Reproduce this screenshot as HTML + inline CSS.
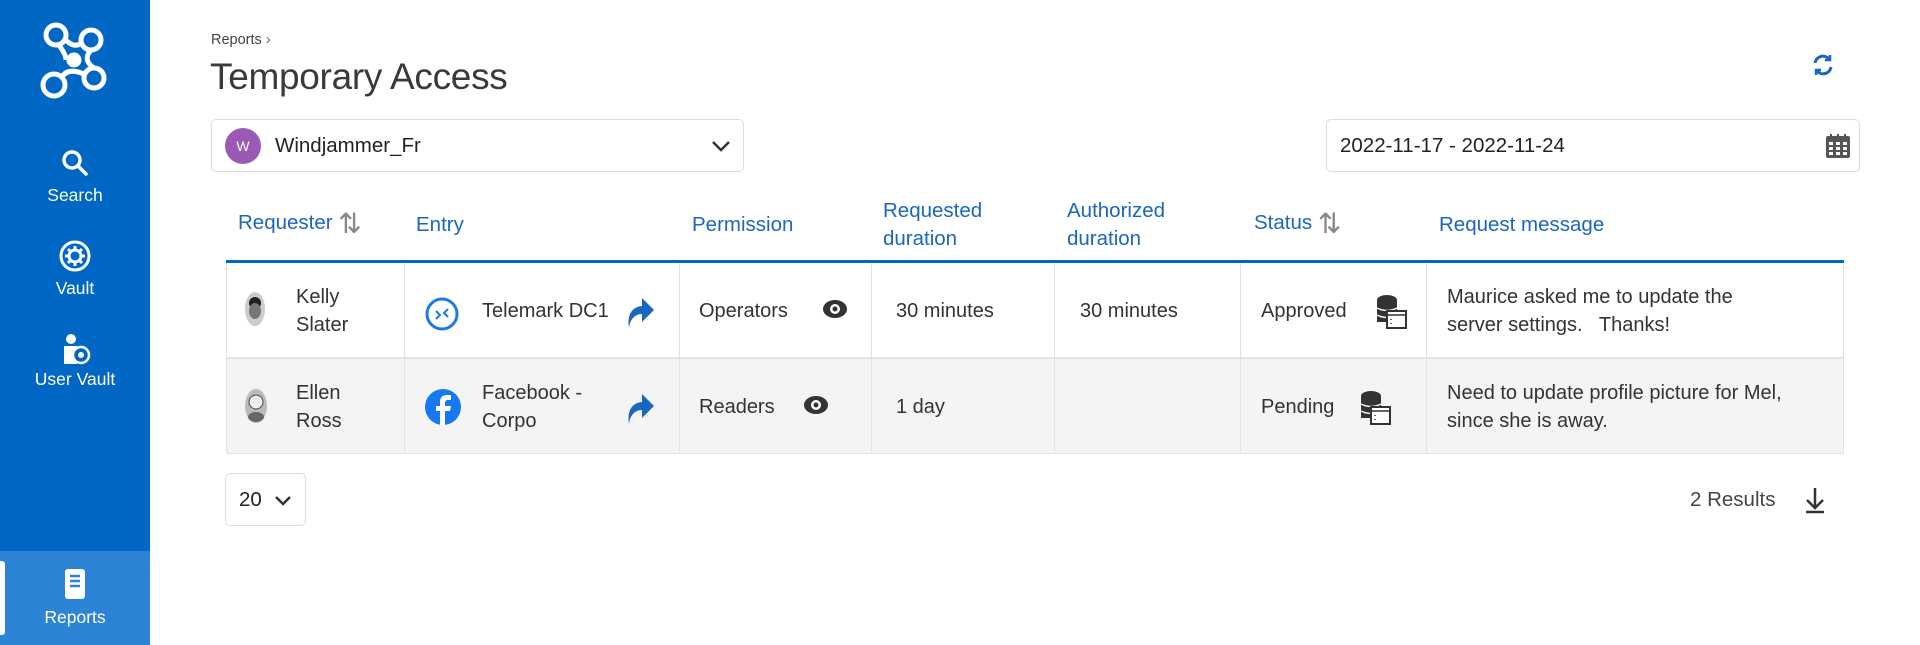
<!DOCTYPE html>
<html><head><meta charset="utf-8"><style>
*{box-sizing:border-box;margin:0;padding:0}
body{width:1920px;height:645px;overflow:hidden;background:#fff;font-family:"Liberation Sans",sans-serif;color:#333;position:relative}
.sb{position:absolute;left:0;top:0;width:150px;height:645px;background:#0067c5}
.nav{position:absolute;left:0;width:150px;text-align:center;color:#fff;font-size:17.5px}
.nav svg{display:block;margin:0 auto}
.act{position:absolute;left:0;top:551px;width:150px;height:94px;background:#2d83d6}
.act:before{content:"";position:absolute;left:0;top:10px;width:5px;height:74px;background:#fff;border-radius:0 3px 3px 0}
.abs{position:absolute}
.box{position:absolute;border:1px solid #ddd;border-radius:5px;background:#fff}
.th{position:absolute;color:#1a66c0;font-size:20.5px;line-height:28px}
.td{position:absolute;font-size:20px;line-height:28px;color:#333}
.vl{position:absolute;width:1px;background:#e2e2e2}
.sort{color:#888;font-size:28px;vertical-align:-4px}
</style></head><body>
<div class="sb">
 <svg class="abs" style="left:36px;top:20px" width="78" height="82" viewBox="0 0 78 82" fill="none" stroke="#fff" stroke-width="5">
  <circle cx="20" cy="15" r="10"/><circle cx="55" cy="20" r="10"/><circle cx="18" cy="65" r="11"/><circle cx="58" cy="58" r="10"/>
  <circle cx="38" cy="40" r="5" fill="#fff"/><path d="M28 18 Q38 30 47 22 M25 58 Q32 46 50 55 M22 24 Q30 34 30 40 M55 30 Q46 40 58 48"/>
 </svg>
 <div class="nav" style="top:148px"><svg width="30" height="30" viewBox="0 0 30 30" fill="none" stroke="#fff" stroke-width="3.5"><circle cx="12" cy="12" r="8"/><path d="M18 18l8 8" stroke-linecap="round"/></svg><div style="margin-top:7px">Search</div></div>
 <div class="nav" style="top:239px"><svg width="34" height="34" viewBox="0 0 34 34" fill="none" stroke="#fff" stroke-width="3"><circle cx="17" cy="17" r="14"/><circle cx="17" cy="17" r="6"/><path d="M17 7v4M17 23v4M7 17h4M23 17h4M10 10l3 3M21 21l3 3M24 10l-3 3M10 24l3-3"/></svg><div style="margin-top:5px">Vault</div></div>
 <div class="nav" style="top:332px"><svg width="34" height="34" viewBox="0 0 34 34" fill="#fff"><circle cx="13" cy="7" r="5"/><path d="M6 14h13v18H6z"/><circle cx="23" cy="23" r="8" fill="#0067c5" stroke="#fff" stroke-width="2.5"/><circle cx="23" cy="23" r="3"/></svg><div style="margin-top:3px">User Vault</div></div>
 <div class="act"></div>
 <div class="nav" style="top:568px"><svg width="26" height="32" viewBox="0 0 26 32"><rect x="3" y="1" width="20" height="30" rx="3" fill="#fff"/><path d="M8 8h10M8 13h10M8 18h10" stroke="#2d83d6" stroke-width="2.5"/></svg><div style="margin-top:7px">Reports</div></div>
</div>

<div class="abs" style="left:211px;top:32px;font-size:14.5px;color:#444">Reports <span style="color:#666">&#8250;</span></div>
<div class="abs" style="left:210px;top:56px;font-size:37px;color:#3a3a3a;letter-spacing:-0.3px">Temporary Access</div>
<svg class="abs" style="left:1811px;top:53px" width="24" height="24" viewBox="0 0 24 24" fill="none" stroke="#1a66c0" stroke-width="3"><path d="M4 10a8 8 0 0 1 14-4M20 14a8 8 0 0 1-14 4"/><path d="M19 2v5h-5M5 22v-5h5" stroke-width="2.5"/></svg>

<div class="box" style="left:211px;top:119px;width:533px;height:53px">
 <div class="abs" style="left:13px;top:8px;width:36px;height:36px;border-radius:50%;background:#9b59b6;color:#fff;font-size:14px;text-align:center;line-height:36px">W</div>
 <div class="abs" style="left:63px;top:14px;font-size:20.5px;color:#222">Windjammer_Fr</div>
 <svg class="abs" style="left:499px;top:19px" width="20" height="14" viewBox="0 0 20 14" fill="none" stroke="#333" stroke-width="2.5"><path d="M2 3l8 8 8-8"/></svg>
</div>
<div class="box" style="left:1326px;top:119px;width:534px;height:53px">
 <div class="abs" style="left:13px;top:14px;font-size:20.5px;color:#222">2022-11-17 - 2022-11-24</div>
 <svg class="abs" style="left:498px;top:13px" width="26" height="26" viewBox="0 0 26 26"><rect x="1" y="3" width="24" height="22" rx="2" fill="#555"/><path d="M6 1v5M13 1v5M20 1v5" stroke="#555" stroke-width="2"/><g fill="#fff"><rect x="4" y="9" width="4" height="3"/><rect x="11" y="9" width="4" height="3"/><rect x="18" y="9" width="4" height="3"/><rect x="4" y="14" width="4" height="3"/><rect x="11" y="14" width="4" height="3"/><rect x="18" y="14" width="4" height="3"/><rect x="4" y="19" width="4" height="3"/><rect x="11" y="19" width="4" height="3"/><rect x="18" y="19" width="4" height="3"/></g></svg>
</div>

<div class="th" style="left:238px;top:209px">Requester <span class="sort">&#8645;</span></div>
<div class="th" style="left:416px;top:211px">Entry</div>
<div class="th" style="left:692px;top:211px">Permission</div>
<div class="th" style="left:883px;top:197px">Requested<br>duration</div>
<div class="th" style="left:1067px;top:197px">Authorized<br>duration</div>
<div class="th" style="left:1254px;top:209px">Status <span class="sort">&#8645;</span></div>
<div class="th" style="left:1439px;top:211px">Request message</div>

<div class="abs" style="left:226px;top:260px;width:1618px;height:3px;background:#0067c5"></div>
<div class="abs" style="left:226px;top:263px;width:1618px;height:95px;background:#fff;border-left:1px solid #e2e2e2;border-right:1px solid #e2e2e2"></div>
<div class="abs" style="left:226px;top:357px;width:1618px;height:2px;background:#e4e4e4"></div>
<div class="abs" style="left:226px;top:359px;width:1618px;height:95px;background:#f4f4f4;border:1px solid #e2e2e2;border-top:none"></div>
<div class="vl" style="left:404px;top:263px;height:190px"></div>
<div class="vl" style="left:679px;top:263px;height:190px"></div>
<div class="vl" style="left:871px;top:263px;height:190px"></div>
<div class="vl" style="left:1054px;top:263px;height:190px"></div>
<div class="vl" style="left:1240px;top:263px;height:190px"></div>
<div class="vl" style="left:1426px;top:263px;height:190px"></div>

<!-- row 1 -->
<svg class="abs" style="left:244px;top:291px" width="22" height="36" viewBox="0 0 22 36"><ellipse cx="11" cy="18" rx="10" ry="17" fill="#ccc"/><circle cx="11" cy="12" r="6" fill="#222"/><ellipse cx="11" cy="20" rx="6" ry="8" fill="#777"/></svg>
<div class="td" style="left:296px;top:283px">Kelly<br>Slater</div>
<svg class="abs" style="left:424px;top:296px" width="36" height="36" viewBox="0 0 36 36" fill="none" stroke="#1f7ae0" stroke-width="3"><circle cx="18" cy="18" r="15"/><path d="M12 15l4 4-4 4M24 13l-4 4 4 4" stroke-width="2"/></svg>
<div class="td" style="left:482px;top:297px">Telemark DC1</div>
<svg class="abs" style="left:625px;top:294px" width="30" height="34" viewBox="0 0 30 34" fill="#1a66c0"><path d="M4 34C2 22 6 13 17 12V4l12 12-12 12v-8C10 20 5 25 4 34z"/></svg>
<div class="td" style="left:699px;top:297px">Operators</div>
<svg class="abs" style="left:822px;top:299px" width="26" height="20" viewBox="0 0 26 20"><ellipse cx="13" cy="10" rx="12" ry="9" fill="#333"/><circle cx="13" cy="10" r="5" fill="#fff"/><circle cx="13" cy="10" r="2.5" fill="#333"/></svg>
<div class="td" style="left:896px;top:297px">30 minutes</div>
<div class="td" style="left:1080px;top:297px">30 minutes</div>
<div class="td" style="left:1261px;top:297px">Approved</div>
<svg class="abs" style="left:1376px;top:294px" width="32" height="36" viewBox="0 0 32 36"><ellipse cx="11" cy="6" rx="10" ry="5" fill="#333"/><rect x="1" y="6" width="20" height="22" fill="#333"/><path d="M1 14q10 5 20 0M1 21q10 5 20 0" stroke="#fff" stroke-width="1.5" fill="none"/><rect x="11" y="17" width="19" height="17" fill="#fff" stroke="#333" stroke-width="2"/><path d="M11 21h19M15 25v1M15 29v1" stroke="#333" stroke-width="1.5"/></svg>
<div class="td" style="left:1447px;top:283px">Maurice asked me to update the<br>server settings.&nbsp;&nbsp; Thanks!</div>

<!-- row 2 -->
<svg class="abs" style="left:244px;top:387px" width="24" height="38" viewBox="0 0 24 38"><ellipse cx="12" cy="19" rx="11" ry="17" fill="#bbb"/><circle cx="12" cy="15" r="7" fill="#eee" stroke="#444"/><ellipse cx="12" cy="30" rx="8" ry="5" fill="#666"/></svg>
<div class="td" style="left:296px;top:379px">Ellen<br>Ross</div>
<svg class="abs" style="left:424px;top:388px" width="38" height="38" viewBox="0 0 38 38"><circle cx="19" cy="19" r="18" fill="#1877f2"/><path d="M21 37V23h5l1-5h-6v-3c0-2 1-3 3-3h3V7h-4c-5 0-7 3-7 7v4h-4v5h4v14z" fill="#fff"/></svg>
<div class="td" style="left:482px;top:379px">Facebook -<br>Corpo</div>
<svg class="abs" style="left:625px;top:390px" width="30" height="34" viewBox="0 0 30 34" fill="#1a66c0"><path d="M4 34C2 22 6 13 17 12V4l12 12-12 12v-8C10 20 5 25 4 34z"/></svg>
<div class="td" style="left:699px;top:393px">Readers</div>
<svg class="abs" style="left:803px;top:395px" width="26" height="20" viewBox="0 0 26 20"><ellipse cx="13" cy="10" rx="12" ry="9" fill="#333"/><circle cx="13" cy="10" r="5" fill="#fff"/><circle cx="13" cy="10" r="2.5" fill="#333"/></svg>
<div class="td" style="left:896px;top:393px">1 day</div>
<div class="td" style="left:1261px;top:393px">Pending</div>
<svg class="abs" style="left:1360px;top:390px" width="32" height="36" viewBox="0 0 32 36"><ellipse cx="11" cy="6" rx="10" ry="5" fill="#333"/><rect x="1" y="6" width="20" height="22" fill="#333"/><path d="M1 14q10 5 20 0M1 21q10 5 20 0" stroke="#f4f4f4" stroke-width="1.5" fill="none"/><rect x="11" y="17" width="19" height="17" fill="#fff" stroke="#333" stroke-width="2"/><path d="M11 21h19M15 25v1M15 29v1" stroke="#333" stroke-width="1.5"/></svg>
<div class="td" style="left:1447px;top:379px">Need to update profile picture for Mel,<br>since she is away.</div>

<div class="box" style="left:225px;top:473px;width:81px;height:53px">
 <div class="abs" style="left:13px;top:14px;font-size:20.5px;color:#222">20</div>
 <svg class="abs" style="left:48px;top:21px" width="18" height="12" viewBox="0 0 18 12" fill="none" stroke="#333" stroke-width="2.5"><path d="M2 2l7 7 7-7"/></svg>
</div>
<div class="abs" style="left:1690px;top:488px;font-size:20.5px;color:#444">2 Results</div>
<svg class="abs" style="left:1803px;top:486px" width="24" height="28" viewBox="0 0 24 28" fill="none" stroke="#333" stroke-width="2.5"><path d="M12 2v20M4 14l8 8 8-8M3 26h18"/></svg>
</body></html>
